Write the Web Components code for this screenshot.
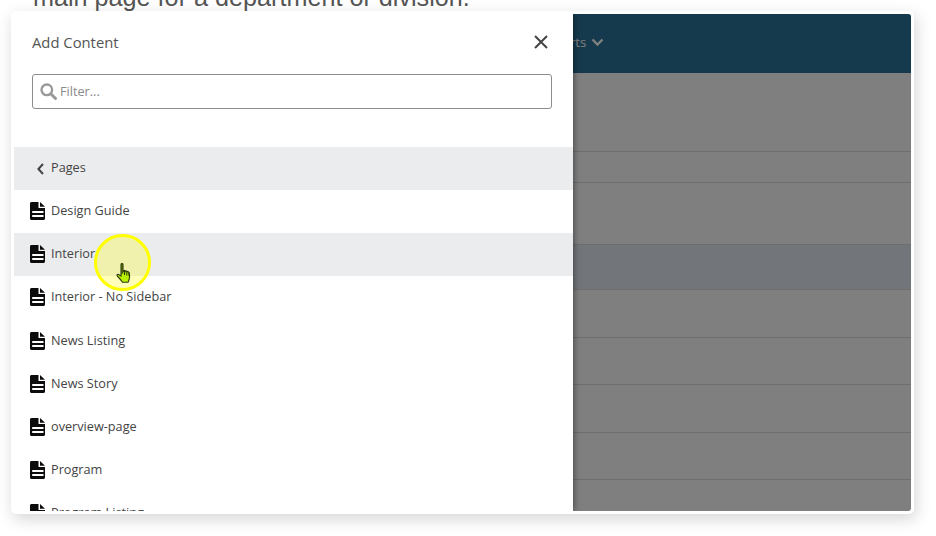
<!DOCTYPE html>
<html>
<head>
<meta charset="utf-8">
<title>Add Content</title>
<style>
    html, body { margin: 0; background: #fff; }
</style>
</head>
<body>
<page-frame>
    <lead-text slot="lead">main page for a department or division.</lead-text>
    <site-backdrop slot="site"></site-backdrop>
    <content-drawer slot="drawer" heading="Add Content" placeholder="Filter...">
        <content-crumb>Pages</content-crumb>
        <content-item>Design Guide</content-item>
        <content-item active>Interior</content-item>
        <content-item>Interior - No Sidebar</content-item>
        <content-item>News Listing</content-item>
        <content-item>News Story</content-item>
        <content-item>overview-page</content-item>
        <content-item>Program</content-item>
        <content-item>Program Listing</content-item>
    </content-drawer>
    <cursor-spot slot="cursor"></cursor-spot>
</page-frame>

<script>
/**
 * Create an open shadow root from a chunk of markup.
 */
function _render(host, html) {
    host.attachShadow({ mode: 'open' }).innerHTML = html;
}

class PageFrame extends HTMLElement {
    constructor() {
        super();
        _render(this, `
            <style>
                :host { display: block; width: 936px; height: 536px; overflow: hidden; position: relative; }
                .card {
                    box-sizing: border-box;
                    width: 903px;
                    height: 503px;
                    margin-left: 11px;
                    padding: 3px;
                    background: #fff;
                    border-radius: 5px;
                    box-shadow: 2px 5px 16px rgba(0, 0, 0, .17);
                    position: relative;
                }
                .screen { position: relative; height: 497px; overflow: hidden; border-radius: 0 3px 3px 0; }
            </style>
            <slot name="lead"></slot>
            <div class="card">
                <div class="screen">
                    <slot name="site"></slot>
                    <slot name="drawer"></slot>
                </div>
            </div>
            <slot name="cursor"></slot>
        `);
    }
}

class LeadText extends HTMLElement {
    constructor() {
        super();
        _render(this, `
            <style>
                :host {
                    display: block;
                    height: 27px;
                    margin-top: -16px;
                    padding-left: 33px;
                    font: 25.200px/26px "Liberation Sans", Arial, sans-serif;
                    color: #555;
                    white-space: nowrap;
                }
            </style>
            <slot></slot>
        `);
    }
}

class SiteBackdrop extends HTMLElement {
    constructor() {
        super();
        // row heights follow the table behind the dimmed layer
        const rows = [79, 31, 62, 45, 48, 47, 48, 47, 32];
        const cells = rows.map((h, i) => `<div class="row${i === 3 ? ' hi' : ''}" style="height:${h}px"></div>`).join('');

        _render(this, `
            <style>
                :host { display: block; height: 100%; position: relative; }
                header {
                    display: flex;
                    align-items: center;
                    gap: 5px;
                    box-sizing: border-box;
                    height: 59px;
                    padding: 0 0 3px 556px;
                    background: #2c749a;
                    color: #fff;
                    font: 13px "Open Sans", sans-serif;
                }
                .row { box-sizing: border-box; background: #fff; border-bottom: 1px solid #dcdcdc; }
                .row.hi { background: #e4ecf6; }
                .dim { position: absolute; inset: 0; background: rgba(0, 0, 0, .5); }
                svg { display: block; }
            </style>
            <header>
                <span>rts</span>
                <svg width="13" height="9" viewBox="0 0 13 9"><path d="M1.500 1.500 6.500 6.500l5-5" fill="none" stroke="#fff" stroke-width="2.400"/></svg>
            </header>
            ${cells}
            <div class="dim"></div>
        `);
    }
}

class ContentDrawer extends HTMLElement {
    constructor() {
        super();
        _render(this, `
            <style>
                :host {
                    position: absolute;
                    top: 0;
                    left: 0;
                    bottom: 0;
                    width: 559px;
                    display: flex;
                    flex-direction: column;
                    background: #fff;
                    box-shadow: 0 0 7px rgba(0, 0, 0, .55);
                    font: 12.700px "Open Sans", sans-serif;
                    color: #444;
                }
                .title {
                    display: flex;
                    align-items: center;
                    justify-content: space-between;
                    height: 20px;
                    margin: 18px 25px 22px 18px;
                    font-size: 14.800px;
                    color: #555;
                }
                .filter {
                    box-sizing: border-box;
                    display: flex;
                    align-items: center;
                    gap: 3px;
                    height: 35px;
                    margin: 0 21px 38px 18px;
                    padding: 0 0 1px 7px;
                    border: 1px solid #8c8c8c;
                    border-radius: 3px;
                    color: #8a8a8a;
                }
                .list { flex: 1; min-height: 0; overflow: hidden; }
                svg { display: block; }
            </style>
            <div class="title">
                <span></span>
                <svg width="14" height="14" viewBox="0 0 14 14"><path d="M1 1l12 12M13 1 1 13" stroke="#444" stroke-width="2" fill="none"/></svg>
            </div>
            <div class="filter">
                <svg width="17" height="17" viewBox="0 0 17 17"><circle cx="6.800" cy="6.800" r="5.300" fill="none" stroke="#999" stroke-width="2.400"/><path d="M10.800 10.800 15.500 15.500" stroke="#999" stroke-width="3" stroke-linecap="round"/></svg>
                <span class="hint"></span>
            </div>
            <div class="list"><slot></slot></div>
        `);
        this.shadowRoot.querySelector('.title span').textContent = this.getAttribute('heading');
        this.shadowRoot.querySelector('.hint').textContent = this.getAttribute('placeholder');
    }
}

class ContentCrumb extends HTMLElement {
    constructor() {
        super();
        _render(this, `
            <style>
                :host {
                    display: flex;
                    align-items: center;
                    gap: 7px;
                    box-sizing: border-box;
                    height: 43px;
                    padding: 0 0 3px 23px;
                    background: #ebecee;
                }
                svg { display: block; position: relative; top: 2px; }
            </style>
            <svg width="7" height="12" viewBox="0 0 7 12"><path d="M6 1 1.400 6 6 11" fill="none" stroke="#444" stroke-width="2"/></svg>
            <slot></slot>
        `);
    }
}

class ContentItem extends HTMLElement {
    constructor() {
        super();
        _render(this, `
            <style>
                :host {
                    display: flex;
                    align-items: center;
                    gap: 6px;
                    box-sizing: border-box;
                    height: 43.200px;
                    padding: 0 0 3px 16px;
                }
                :host([active]) { background: #ebecee; }
                svg { display: block; position: relative; top: 1px; }
            </style>
            <svg width="15" height="18" viewBox="0 0 15 18">
                <path d="M1.500 0H8.500v5.500c0 .4.200.6.600.6H15V16.500c0 .8-.7 1.500-1.500 1.500h-12C.7 18 0 17.300 0 16.500v-15C0 .7.700 0 1.500 0z" fill="#0c0c0c"/>
                <path d="M10 0l5 4.800h-5z" fill="#0c0c0c"/>
                <path d="M2.200 10h11.300M2.200 14h11.300" stroke="#fff" stroke-width="2"/>
            </svg>
            <slot></slot>
        `);
    }
}

class CursorSpot extends HTMLElement {
    constructor() {
        super();
        _render(this, `
            <style>
                :host {
                    position: absolute;
                    left: 94px;
                    top: 234px;
                    width: 57px;
                    height: 57px;
                    box-sizing: border-box;
                    border: 3px solid #ffff00;
                    border-radius: 50%;
                    background: rgba(255, 255, 0, .27);
                }
                svg { position: absolute; left: 19px; top: 26px; }
            </style>
            <svg width="16" height="21" viewBox="0 0 16 21">
                <path d="M5 1.500c0-1.300 2-1.300 2 0V9l1-1.300c.5-.5 1.300-.3 1.500.3l.2.400c.4-.5 1.300-.4 1.500.2l.2.300c.5-.3 1.300-.1 1.500.5.600 1.200.8 3 .6 4.800-.1 2-.8 3.600-1.400 5H6.500C5.300 17.500 3.200 15 1.300 13c-.8-.9.300-2.300 1.300-1.500L5 13z" fill="#b9f000" stroke="#2c3a10" stroke-width="1.100"/>
                <path d="M6 1v10M8.500 8v4M10.800 8.500v4M13 9v4" stroke="#2c3a10" stroke-width="1.100" fill="none"/>
            </svg>
        `);
    }
}

customElements.define('page-frame', PageFrame);
customElements.define('lead-text', LeadText);
customElements.define('site-backdrop', SiteBackdrop);
customElements.define('content-drawer', ContentDrawer);
customElements.define('content-crumb', ContentCrumb);
customElements.define('content-item', ContentItem);
customElements.define('cursor-spot', CursorSpot);
</script>
</body>
</html>
